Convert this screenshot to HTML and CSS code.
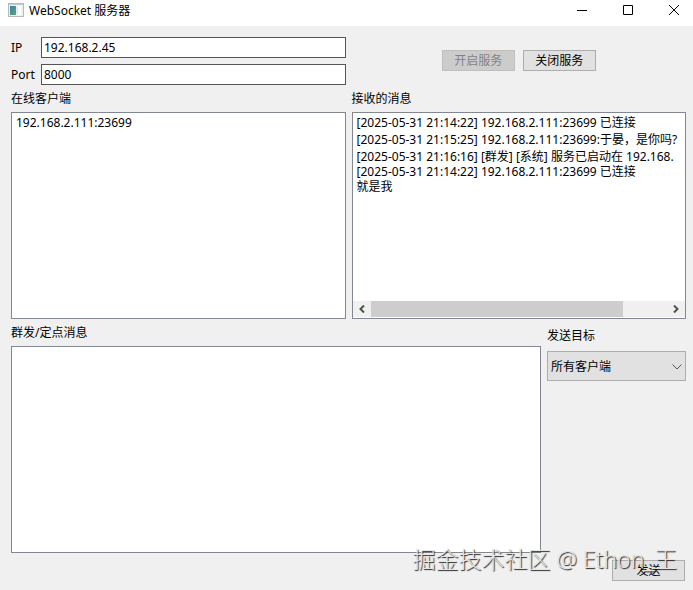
FILE: index.html
```html
<!DOCTYPE html>
<html lang="zh-CN">
<head>
<meta charset="utf-8">
<title>WebSocket 服务器</title>
<link rel="stylesheet" href="styles.css">
</head>
<body>
<div class="window">
  <header class="titlebar">
    <svg class="app-icon" width="16" height="14" viewBox="0 0 16 14" aria-hidden="true">
      <defs>
        <linearGradient id="pane" x1="0" y1="0" x2="1" y2="1">
          <stop offset="0" stop-color="#3f7fa0"/>
          <stop offset="1" stop-color="#58a67c"/>
        </linearGradient>
      </defs>
      <rect x="0.5" y="0.5" width="15" height="13" fill="#eef1f4" stroke="#b3bac2"/>
      <rect x="1" y="1" width="14" height="1" fill="#c3cad2"/>
      <rect x="2" y="3" width="6" height="9" fill="url(#pane)"/>
      <rect x="9" y="3" width="4" height="9" fill="#fff"/>
      <rect x="9" y="4" width="1" height="7" fill="#dde2e6"/>
    </svg>
    <h1 class="title">WebSocket 服务器</h1>
    <div class="window-controls">
      <button class="control" type="button" aria-label="最小化"><svg width="10" height="10" viewBox="0 0 10 10"><path d="M0 5.5H10"/></svg></button>
      <button class="control" type="button" aria-label="最大化"><svg width="10" height="10" viewBox="0 0 10 10"><path d="M.5 .5H9.5V9.5H.5Z"/></svg></button>
      <button class="control" type="button" aria-label="关闭"><svg width="10" height="10" viewBox="0 0 10 10"><path d="M0 0L10 10M10 0L0 10"/></svg></button>
    </div>
  </header>
  <main class="content">
    <div class="columns">
      <div class="fields">
        <label for="ip">IP</label>
        <input class="box" id="ip" type="text" value="192.168.2.45">
        <label for="port">Port</label>
        <input class="box" id="port" type="text" value="8000">
      </div>
      <div class="actions">
        <button class="button" type="button" disabled>开启服务</button>
        <button class="button" type="button">关闭服务</button>
      </div>
    </div>
    <div class="columns panels">
      <section class="panel">
        <h2 class="caption">在线客户端</h2>
        <ul class="box list clients">
          <li>192.168.2.111:23699</li>
        </ul>
      </section>
      <section class="panel">
        <h2 class="caption">接收的消息</h2>
        <div class="box log">
          <ul class="list messages">
            <li>[2025-05-31 21:14:22] 192.168.2.111:23699 已连接</li>
            <li>[2025-05-31 21:15:25] 192.168.2.111:23699:于晏，是你吗?</li>
            <li class="multiline">
              <div>[2025-05-31 21:16:16] [群发] [系统] 服务已启动在 192.168.</div>
              <div>[2025-05-31 21:14:22] 192.168.2.111:23699 已连接</div>
              <div>就是我</div>
            </li>
          </ul>
          <div class="scrollbar">
            <button class="arrow" type="button" aria-label="向左滚动"><svg width="8" height="8" viewBox="0 0 8 8"><path d="M6 .5L2.500 4L6 7.500"/></svg></button>
            <div class="track"><div class="thumb"></div></div>
            <button class="arrow" type="button" aria-label="向右滚动"><svg width="8" height="8" viewBox="0 0 8 8"><path d="M2 .5L5.500 4L2 7.500"/></svg></button>
          </div>
        </div>
      </section>
    </div>
    <div class="compose">
      <div class="panel">
        <label class="caption" for="message">群发/定点消息</label>
        <textarea class="box message" id="message"></textarea>
      </div>
      <div class="target">
        <label class="target-label" for="target">发送目标</label>
        <div class="select">
          <select id="target"><option>所有客户端</option></select>
          <svg class="chevron" width="10" height="6" viewBox="0 0 10 6" aria-hidden="true"><path d="M.5 .5L5 5L9.500 .5"/></svg>
        </div>
      </div>
    </div>
    <div class="footer">
      <button class="button" type="button">发送</button>
    </div>
  </main>
  <div class="watermark">掘金技术社区 @ Ethon_王</div>
</div>
</body>
</html>
```

FILE: styles.css
```css
* {
  box-sizing: border-box;
}

body {
  margin: 0;
  background: #f0f0f0;
  color: #000;
  font: 12px/15px "Noto Sans", "Noto Sans CJK SC", sans-serif;
}

button,
input,
select,
textarea {
  margin: 0;
  color: inherit;
  font: inherit;
}

h1,
h2 {
  margin: 0;
  font: inherit;
}

.window {
  position: relative;
  display: flex;
  flex-direction: column;
  height: 100vh;
  min-height: 400px;
}

.titlebar {
  display: flex;
  align-items: center;
  height: 26px;
  padding: 0 0 6px 8px;
  background: #fff;
}

.app-icon {
  margin-right: 5px;
}

.window-controls {
  display: flex;
  margin-left: auto;
}

.control {
  display: grid;
  place-items: center;
  width: 46px;
  height: 20px;
  padding: 0;
  border: 0;
  background: none;
}

.control:last-child {
  width: 42px;
  padding-left: 4px;
}

svg path {
  fill: none;
  stroke: #000;
}

.content {
  display: flex;
  flex: 1;
  flex-direction: column;
  min-height: 0;
  padding: 11px 7px 9px 11px;
}

.columns {
  display: grid;
  grid-template-columns: 1fr 1fr;
  gap: 6px;
}

.columns > * {
  min-width: 0;
}

.fields {
  display: grid;
  grid-template-columns: 24px 1fr;
  gap: 6px;
  align-items: center;
}

.box {
  border: 1px solid #828790;
  border-radius: 0;
  background: #fff;
  outline: 0;
}

input.box {
  width: 100%;
  height: 21px;
  padding: 0 2px;
  border-color: #555;
}

.actions {
  display: flex;
  align-items: center;
  justify-content: center;
  gap: 8px;
  padding-bottom: 2px;
}

.button {
  width: 73px;
  height: 21px;
  padding: 0;
  border: 1px solid #adadad;
  background: #e1e1e1;
}

.button:disabled {
  border-color: #bfbfbf;
  background: #ccc;
  color: #838383;
}

.panels,
.compose {
  flex: 1 1 0;
  min-height: 0;
}

.panel {
  display: flex;
  flex-direction: column;
  min-height: 0;
}

.caption {
  flex: none;
  line-height: 27px;
}

.list {
  margin: 0;
  padding: 1px 4px;
  list-style: none;
  line-height: 17px;
  white-space: nowrap;
}

.clients {
  flex: 1;
  overflow: hidden;
}

.log {
  display: flex;
  flex: 1;
  flex-direction: column;
  min-height: 0;
  padding-bottom: 1px;
}

.messages {
  flex: 1;
  overflow: hidden;
}

.multiline {
  padding-top: 1px;
  line-height: 15px;
}

.scrollbar {
  display: flex;
  height: 16px;
  padding: 0 1px;
  background: #f0f0f0;
}

.arrow {
  display: grid;
  place-items: center;
  width: 17px;
  padding: 0;
  border: 0;
  background: none;
}

.arrow path {
  stroke: #505050;
  stroke-width: 2;
}

.track {
  flex: 1;
}

.thumb {
  width: 85%;
  height: 100%;
  background: #cdcdcd;
}

.compose {
  display: grid;
  grid-template-columns: 1fr 139px;
  gap: 6px;
}

.message {
  flex: 1;
  width: 100%;
  padding: 4px;
  resize: none;
}

.target-label {
  display: block;
  padding-top: 2px;
  line-height: 30px;
}

.select {
  position: relative;
}

.select select {
  display: block;
  width: 100%;
  height: 30px;
  padding: 0 20px 0 3px;
  border: 1px solid #adadad;
  border-radius: 0;
  background: #e1e1e1;
  appearance: none;
}

.chevron {
  position: absolute;
  top: 13px;
  right: 4px;
  pointer-events: none;
}

.chevron path {
  stroke: #555;
}

.footer {
  display: flex;
  justify-content: flex-end;
  padding: 7px 1px 0 0;
}

.watermark {
  position: absolute;
  right: 16px;
  bottom: 15px;
  color: #e4e4e4;
  font-size: 23px;
  font-weight: 300;
  line-height: 32px;
  white-space: nowrap;
  text-shadow: 1px 1px 1px #222;
  pointer-events: none;
}
```
